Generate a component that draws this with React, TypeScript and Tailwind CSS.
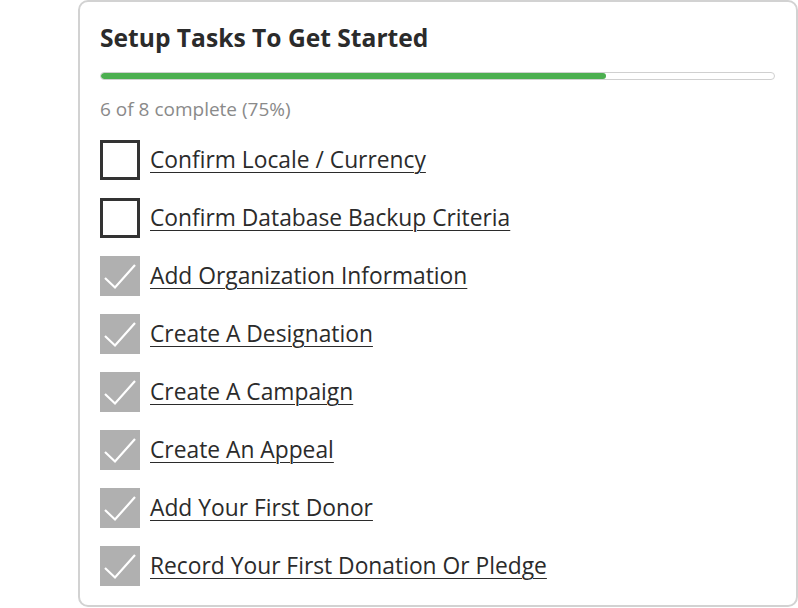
const tasks = [
  { label: 'Confirm Locale / Currency', done: false },
  { label: 'Confirm Database Backup Criteria', done: false },
  { label: 'Add Organization Information', done: true },
  { label: 'Create A Designation', done: true },
  { label: 'Create A Campaign', done: true },
  { label: 'Create An Appeal', done: true },
  { label: 'Add Your First Donor', done: true },
  { label: 'Record Your First Donation Or Pledge', done: true },
];

const Check = ({ done }: { done: boolean }) =>
  done ? (
    <span className="w-10 h-10 shrink-0 bg-[#b0b0b0] flex">
      <svg viewBox="0 0 40 40" className="w-10 h-10">
        <path d="M5 22 L15 31.5 L35 9" fill="none" stroke="#fff" strokeWidth="2.2" />
      </svg>
    </span>
  ) : (
    <span className="w-10 h-10 shrink-0 border-[3px] border-[#333] bg-white" />
  );

export default function App() {
  const complete = tasks.filter((t) => t.done).length;
  const pct = Math.round((complete / tasks.length) * 100);
  return (
    <div className="w-[798px] h-[608px] bg-white font-['Open_Sans',sans-serif] text-[#2b2b2b]">
      <div className="ml-[78px] w-[720px] h-[607px] border-2 border-[#d2d2d2] rounded-[10px] px-5 pt-[20px]">
        <h1 className="text-[24.6px] font-bold leading-8">Setup Tasks To Get Started</h1>
        <div className="mt-[18px] h-2 w-[675px] rounded-full border border-[#d0d0d0] bg-white overflow-hidden">
          <div className="h-full rounded-full bg-[#4caf50]" style={{ width: `${pct}%` }} />
        </div>
        <p className="mt-[17px] text-[19px] leading-6 text-[#8a8a8a]">
          {complete} of {tasks.length} complete ({pct}%)
        </p>
        <ul className="mt-[19px] flex flex-col gap-[18px]">
          {tasks.map((t) => (
            <li key={t.label} className="flex items-center gap-[10px] h-10">
              <Check done={t.done} />
              <a href="#" className="mb-[1px] text-[22.8px] leading-7 underline underline-offset-[4px] decoration-1 text-[#2b2b2b]">
                {t.label}
              </a>
            </li>
          ))}
        </ul>
      </div>
    </div>
  );
}
